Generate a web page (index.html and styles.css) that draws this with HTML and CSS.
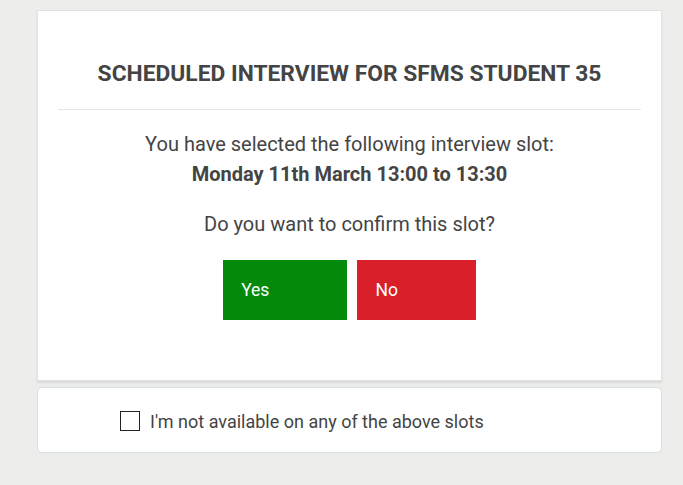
FILE: index.html
```html
<!DOCTYPE html>
<html>
<head>
<meta charset="utf-8">
<link rel="stylesheet" href="styles.css">
</head>
<body>
<div class="page">
  <section class="card main">
    <header class="card-head">
      <h1 class="title">SCHEDULED INTERVIEW FOR SFMS STUDENT 35</h1>
    </header>
    <p class="lead">You have selected the following interview slot:<br><strong>Monday 11th March 13:00 to 13:30</strong></p>
    <p class="question">Do you want to confirm this slot?</p>
    <div class="actions">
      <button class="btn yes">Yes</button>
      <button class="btn no">No</button>
    </div>
  </section>
  <section class="card alt">
    <label class="check-row"><span class="box"></span><span class="check-label">I'm not available on any of the above slots</span></label>
  </section>
</div>
</body>
</html>
```
FILE: styles.css
```css
html, body { margin: 0; padding: 0; }
body {
  background: #ededeb;
  font-family: Roboto, "Noto Sans", sans-serif;
  color: #444;
  width: 683px;
  height: 485px;
  overflow: hidden;
}
.page {
  padding: 10px 0 0 37px;
  width: 625px;
}
.card {
  background: #fff;
  box-sizing: border-box;
}
.main {
  border: 1px solid #e2e2e2;
  box-shadow: 0 2px 2px rgba(0,0,0,0.08);
  padding: 0 20px 60px;
  text-align: center;
}
.card-head {
  padding: 51px 0 23px;
  border-bottom: 1px solid #e6e6e6;
}
.title {
  margin: 0;
  font-size: 22.8px;
  line-height: 24px;
  font-weight: 700;
  color: #444;
}
.lead {
  margin: 19px 0 0;
  font-size: 20px;
  line-height: 30px;
}
.lead strong { font-weight: 700; }
.question {
  margin: 20px 0 0;
  font-size: 20px;
  line-height: 30px;
}
.actions {
  margin-top: 21px;
  display: flex;
  justify-content: center;
  gap: 10px;
}
.btn {
  border: 0;
  height: 60px;
  padding: 0 78px 0 18px;
  font-family: Roboto, sans-serif;
  font-size: 17.5px;
  font-weight: 400;
  color: #fff;
  text-align: left;
}
.yes { background: #038a0b; }
.no { background: #d9202a; }
.alt {
  margin-top: 6px;
  border: 1px solid #d6e1e1;
  border-radius: 5px;
  height: 66px;
  display: flex;
  align-items: center;
  padding: 2px 0 0 82px;
}
.check-row {
  display: flex;
  align-items: center;
  gap: 10px;
  font-size: 18px;
}
.box {
  width: 20px;
  height: 20px;
  box-sizing: border-box;
  border: 1.5px solid #222;
}
```
